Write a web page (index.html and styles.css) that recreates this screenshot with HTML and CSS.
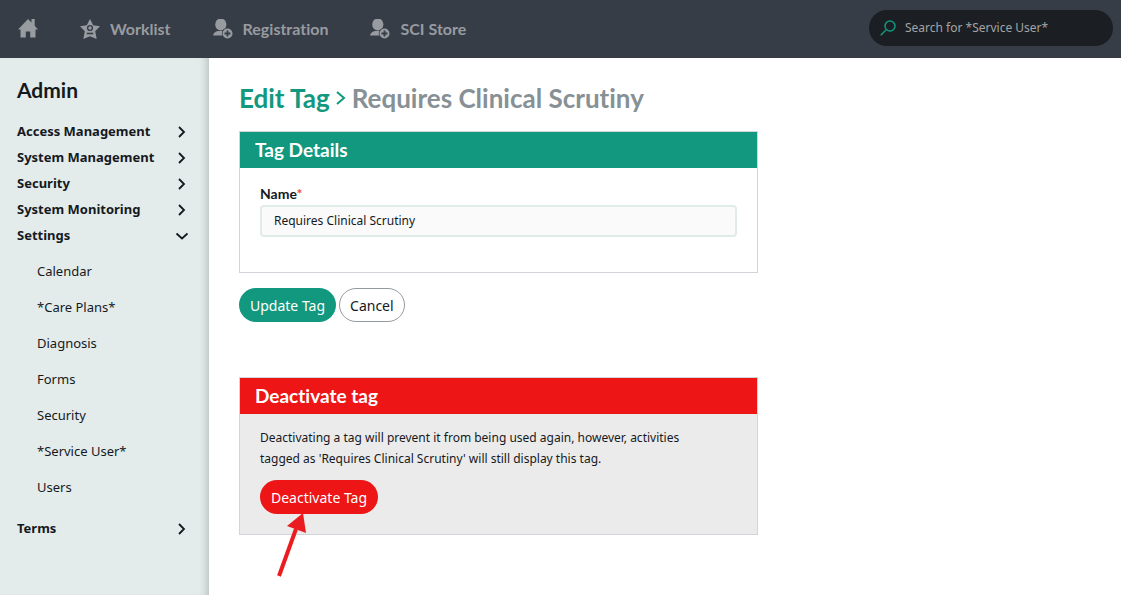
FILE: index.html
```html
<!DOCTYPE html>
<html lang="en">
<head>
    <meta charset="UTF-8">
    <meta name="viewport" content="width=device-width, initial-scale=1.0">
    <title>Edit Tag</title>
    <link rel="stylesheet" href="styles.css">
</head>
<body>
    <svg class="symbols" aria-hidden="true">
        <symbol id="chevron" viewBox="0 0 14 14">
            <path d="M4 3l5 5-5 5" fill="none" stroke="currentColor" stroke-width="1.800"/>
        </symbol>
        <symbol id="chevron-down" viewBox="0 0 14 14">
            <path d="M1.500 5.500l5.500 5 5.500-5" fill="none" stroke="currentColor" stroke-width="1.800"/>
        </symbol>
        <symbol id="user-add" viewBox="0 0 20 20">
            <ellipse cx="7.800" cy="5.500" rx="5.600" ry="6" fill="currentColor"/>
            <path fill="currentColor" d="M0 16.500C.6 13.800 2.400 12.400 5 12h6v4.500z"/>
            <circle cx="14.500" cy="14.500" r="5.700" fill="#363d47"/>
            <circle cx="14.500" cy="14.500" r="5" fill="currentColor"/>
            <path d="M14.500 11.500v6M11.500 14.500h6" stroke="#363d47" stroke-width="1.800"/>
        </symbol>
    </svg>

    <header class="topbar">
        <nav class="topnav">
            <a href="#" aria-label="Home">
                <svg class="icon" viewBox="0 0 20 20"><path fill="currentColor" d="M10 0L0 10.500h2.500V18.500h5.300v-6h4.400v6h5.300v-8H20l-3.300-3.700V0h-3.200v3.600z"/></svg>
            </a>
            <a href="#">
                <svg class="icon" viewBox="0 0 20 20">
                    <path fill="currentColor" d="M10 0l3.200 6.300 6.800 1-4.800 5 1.500 7.700L10 17.300 3.300 20l1.500-7.700L0 7.300l6.800-1z"/>
                    <circle cx="10" cy="9" r="2.400" fill="none" stroke="#363d47" stroke-width="1.400"/>
                    <path d="M6.800 14.500h6.400" fill="none" stroke="#363d47" stroke-width="1.600"/>
                </svg>
                <span>Worklist</span>
            </a>
            <a href="#">
                <svg class="icon"><use href="#user-add"/></svg>
                <span>Registration</span>
            </a>
            <a href="#">
                <svg class="icon"><use href="#user-add"/></svg>
                <span>SCI Store</span>
            </a>
        </nav>
        <form class="search">
            <svg class="search-icon" viewBox="0 0 16 16"><path d="M6 10L.7 15.300" stroke="currentColor" stroke-width="1.500"/><circle cx="10" cy="6" r="5" fill="none" stroke="currentColor" stroke-width="1.500"/></svg>
            <input type="search" placeholder="Search for *Service User*" aria-label="Search for *Service User*">
        </form>
    </header>

    <div class="layout">
        <aside class="sidebar">
            <h2>Admin</h2>
            <ul class="menu">
                <li><button type="button">Access Management <svg class="chevron"><use href="#chevron"/></svg></button></li>
                <li><button type="button">System Management <svg class="chevron"><use href="#chevron"/></svg></button></li>
                <li><button type="button">Security <svg class="chevron"><use href="#chevron"/></svg></button></li>
                <li><button type="button">System Monitoring <svg class="chevron"><use href="#chevron"/></svg></button></li>
                <li>
                    <button type="button" aria-expanded="true">Settings <svg class="chevron"><use href="#chevron-down"/></svg></button>
                    <ul class="submenu">
                        <li><a href="#">Calendar</a></li>
                        <li><a href="#">*Care Plans*</a></li>
                        <li><a href="#">Diagnosis</a></li>
                        <li><a href="#">Forms</a></li>
                        <li><a href="#">Security</a></li>
                        <li><a href="#">*Service User*</a></li>
                        <li><a href="#">Users</a></li>
                    </ul>
                </li>
                <li><button type="button">Terms <svg class="chevron"><use href="#chevron"/></svg></button></li>
            </ul>
        </aside>

        <main class="content">
            <h1>
                <a href="#">Edit Tag</a>
                <svg class="crumb" viewBox="0 0 10 14"><path d="M1 1l7 6-7 6" fill="none" stroke="currentColor" stroke-width="2"/></svg>
                <span>Requires Clinical Scrutiny</span>
            </h1>

            <form>
                <section class="panel">
                    <h3>Tag Details</h3>
                    <div class="panel-body">
                        <label for="name">Name<span class="required">*</span></label>
                        <input type="text" id="name" value="Requires Clinical Scrutiny">
                    </div>
                </section>
                <div class="actions">
                    <button type="submit" class="btn btn-primary">Update Tag</button>
                    <button type="button" class="btn btn-cancel">Cancel</button>
                </div>
            </form>

            <section class="panel panel-danger">
                <h3>Deactivate tag</h3>
                <div class="panel-body">
                    <p>Deactivating a tag will prevent it from being used again, however, activities tagged as 'Requires Clinical Scrutiny' will still display this tag.</p>
                    <div class="pointed">
                        <button type="button" class="btn btn-danger">Deactivate Tag</button>
                        <svg class="arrow" viewBox="0 0 34 64" aria-hidden="true"><path d="M4 63L21 16" stroke="#eb1c1f" stroke-width="4"/><path fill="#eb1c1f" d="M28 0l3 20-19-7z"/></svg>
                    </div>
                </div>
            </section>
        </main>
    </div>
</body>
</html>
```

FILE: styles.css
```css
* {
    box-sizing: border-box;
}
body {
    margin: 0;
    min-height: 100vh;
    display: flex;
    flex-direction: column;
    font-family: "Noto Sans", sans-serif;
    font-size: 12px;
    color: #15191e;
    background-color: #fff;
}
a {
    color: inherit;
    text-decoration: none;
}
button, input {
    font: inherit;
    color: inherit;
}
ul {
    list-style: none;
    margin: 0;
    padding: 0;
}
h1, h2, h3 {
    font-family: Lato, sans-serif;
    font-variant-ligatures: none;
    margin: 0;
}
.symbols {
    display: none;
}

/* top bar */
.topbar {
    display: flex;
    align-items: center;
    justify-content: space-between;
    height: 58px;
    padding: 0 8px 2px 18px;
    background-color: #363d47;
}
.topnav {
    display: flex;
    gap: 42px;
}
.topnav a {
    display: flex;
    align-items: center;
    gap: 10px;
    font-family: Lato, sans-serif;
    font-variant-ligatures: none;
    font-size: 16px;
    font-weight: bold;
    color: #989ba0;
}
.icon {
    width: 20px;
    height: 20px;
    margin-top: 2px;
}
.search {
    display: flex;
    align-items: center;
    gap: 9px;
    width: 244px;
    height: 36px;
    padding: 0 11px;
    border-radius: 18px;
    background-color: #1b1f23;
}
.search-icon {
    flex: none;
    width: 16px;
    height: 16px;
    color: #11987e;
}
.search input {
    width: 100%;
    padding: 0 0 2px;
    border: none;
    outline: none;
    background: none;
}
.search input::placeholder {
    color: #a3a4a5;
}

/* side menu */
.layout {
    flex: 1;
    display: flex;
}
.sidebar {
    flex: none;
    width: 209px;
    padding: 18px 20px 0 17px;
    background-color: #e3eceb;
    box-shadow: inset -8px 0 8px -6px rgba(0,0,0,0.2);
}
.sidebar h2 {
    font-size: 21px;
    line-height: 28px;
    margin-bottom: 14px;
}
.menu button {
    display: flex;
    align-items: center;
    justify-content: space-between;
    width: 100%;
    height: 26px;
    padding: 0;
    border: none;
    background: none;
    font-size: 13px;
    font-weight: bold;
    cursor: pointer;
}
.chevron {
    width: 14px;
    height: 14px;
}
.submenu {
    padding: 5px 0 10px 20px;
}
.submenu a {
    display: block;
    font-size: 13px;
    line-height: 36px;
}

/* page */
.content {
    flex: 1;
    padding: 24px 30px;
}
h1 {
    display: flex;
    align-items: center;
    gap: 6px;
    margin-bottom: 17px;
    font-size: 26px;
    line-height: 32px;
    color: #869095;
}
h1 a, .crumb {
    color: #11987e;
}
.crumb {
    width: 10px;
    height: 14px;
}
.panel {
    max-width: 519px;
    border: 1px solid #d1d5d9;
}
.panel h3 {
    padding: 0 15px;
    font-size: 19px;
    line-height: 36px;
    color: #fff;
    background-color: #11987e;
}
.panel-body {
    padding: 14px 20px 35px;
}
label {
    display: block;
    font-family: Lato, sans-serif;
    font-size: 14px;
    font-weight: bold;
    line-height: 23px;
}
.required {
    color: #f04a4a;
}
.panel input {
    display: block;
    width: 100%;
    height: 32px;
    padding: 0 12px 2px;
    border: 2px solid #e0ece9;
    border-radius: 4px;
    background-color: #fafafa;
}
.actions {
    display: flex;
    gap: 3px;
    margin: 15px 0 55px;
}
.btn {
    height: 34px;
    padding: 0 10px;
    border: 1px solid transparent;
    border-radius: 17px;
    font-size: 14px;
    cursor: pointer;
}
.btn-primary {
    color: #fff;
    background-color: #11987e;
}
.btn-cancel {
    border-color: #949b9e;
    background-color: #fff;
}
.btn-danger {
    color: #fff;
    background-color: #ed1515;
}
.panel-danger {
    background-color: #ebebeb;
}
.panel-danger h3 {
    background-color: #ed1515;
}
.panel-danger .panel-body {
    padding: 13px 20px 20px;
}
.panel-danger p {
    margin: 0 0 11px;
    padding-right: 20px;
    line-height: 21px;
}
.pointed {
    position: relative;
}
.arrow {
    position: absolute;
    top: 33px;
    left: 15px;
    width: 34px;
    height: 64px;
}
```
